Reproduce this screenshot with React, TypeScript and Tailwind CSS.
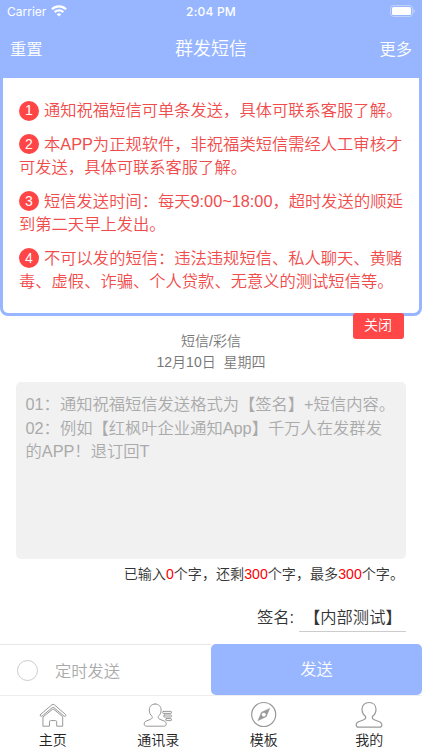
import type { ReactNode } from "react";

const notices: string[][] = [
  ["通知祝福短信可单条发送，具体可联系客服了解。"],
  ["本APP为正规软件，非祝福类短信需经人工审核才", "可发送，具体可联系客服了解。"],
  ["短信发送时间：每天9:00~18:00，超时发送的顺延", "到第二天早上发出。"],
  ["不可以发的短信：违法违规短信、私人聊天、黄赌", "毒、虚假、诈骗、个人贷款、无意义的测试短信等。"],
];

const placeholder = [
  "01：通知祝福短信发送格式为【签名】+短信内容。",
  "02：例如【红枫叶企业通知App】千万人在发群发",
  "的APP！退订回T",
];

function Icon({ children }: { children: ReactNode }) {
  return (
    <svg
      width="30"
      height="28"
      viewBox="0 0 30 28"
      fill="none"
      stroke="#999"
      strokeWidth="1"
      strokeLinejoin="round"
      strokeLinecap="round"
    >
      {children}
    </svg>
  );
}

const tabs: { label: string; icon: ReactNode }[] = [
  {
    label: "主页",
    icon: (
      <Icon>
        <path d="M2.500 13.500 14 3.700q1.100-.9 2.200 0L27.600 13.500q.7.9 0 1.600-.8.6-1.600 0L16 6.700q-.9-.7-1.800 0L4 15.100q-.9.6-1.600-.1-.5-.8.1-1.500Z" />
        <path d="M5.300 15.700 14.200 8.500q.9-.7 1.800 0l8.700 7.200v9.500h-6v-4.500q0-1.100-1.100-1.100h-5q-1.100 0-1.100 1.100v4.500H5.300Z" />
      </Icon>
    ),
  },
  {
    label: "通讯录",
    icon: (
      <Icon>
        <path d="M12.2 3c-3.6 0-5.9 2.5-5.9 6.1 0 2.7 1 4.9 2.9 6.3.3 1.600-.3 2.400-1.800 3L3.200 20c-1.400.6-2 1.500-2 3.100 0 1.400.8 2.100 2.400 2.100h17.200c1.600 0 2.400-.7 2.400-2.100 0-1.600-.6-2.500-2-3.100L17 18.400c-1.500-.6-2.100-1.400-1.800-3 1.900-1.400 2.900-3.600 2.900-6.300C18.100 5.500 15.800 3 12.200 3Z" />
        <rect x="19.800" y="10.400" width="8.600" height="2" rx=".5" />
        <rect x="20.800" y="14" width="7.600" height="2" rx=".5" />
        <rect x="22.800" y="17.600" width="5.600" height="2" rx=".5" />
      </Icon>
    ),
  },
  {
    label: "模板",
    icon: (
      <Icon>
        <circle cx="14.700" cy="13.500" r="12" strokeWidth="1.200" />
        <path
          d="M20.700 7.500 17.300 15.700 8.900 19.700 12.400 11.300ZM14.800 11.400a2.200 2.200 0 1 0 .01 4.400a2.200 2.200 0 1 0-.01-4.400Z"
          fill="#999"
          fillRule="evenodd"
          strokeWidth=".4"
        />
      </Icon>
    ),
  },
  {
    label: "我的",
    icon: (
      <Icon>
        <path
          strokeWidth="1.200"
          d="M15 1.500c-4.200 0-7 2.600-7 6.800 0 3 1.300 5.500 3.600 7.200.4 1.800-.2 2.700-1.800 3.300l-5.100 1.900c-1.700.6-2.500 1.600-2.500 3.200 0 1.400.7 2.200 2.200 2.200h21.200c1.500 0 2.200-.8 2.200-2.200 0-1.600-.8-2.600-2.500-3.200l-5.100-1.900c-1.600-.6-2.200-1.500-1.800-3.300C20.700 13.800 22 11.300 22 8.300 22 4.100 19.200 1.500 15 1.500Z"
        />
      </Icon>
    ),
  },
];

function StatusBar() {
  return (
    <div className="grid h-[22px] grid-cols-3 items-center px-[7px] font-['Inter',sans-serif] text-[12px] font-normal text-white">
      <div className="flex items-center gap-[5px]">
        <span>Carrier</span>
        <svg className="mb-px" width="16" height="12" viewBox="0 0 16 12" fill="none" stroke="#fff" strokeWidth="2.300">
          <path d="M1 4.300a10 10 0 0 1 14 0" />
          <path d="M3.700 7.200a6.200 6.200 0 0 1 8.600 0" />
          <path d="M8 11.600 5.700 9.300a3.300 3.300 0 0 1 4.600 0Z" fill="#fff" stroke="none" />
        </svg>
      </div>
      <span className="text-center font-medium tracking-[0.2px]">2:04 PM</span>
      <svg className="mb-[2px] justify-self-end" width="25" height="12" viewBox="0 0 25 12">
        <rect x=".5" y=".5" width="22" height="11" rx="3" fill="none" stroke="#fff" strokeOpacity=".4" />
        <rect x="2" y="2" width="19" height="8" rx="1.600" fill="#fff" />
        <path d="M23.600 4v4q1.200-.7 1.200-2t-1.200-2Z" fill="#fff" fillOpacity=".5" />
      </svg>
    </div>
  );
}

export default function App() {
  return (
    <div className="flex h-[750px] w-[422px] flex-col overflow-hidden bg-white font-['Liberation_Sans','Noto_Sans_CJK_SC',sans-serif] text-[16.3px] leading-[23.5px] font-[350] whitespace-nowrap text-[#333]">
      <header className="h-[78px] bg-[#97b6ff] text-white">
        <StatusBar />
        <div className="flex h-[56px] items-center justify-between px-2.5">
          <span>重置</span>
          <h1 className="text-[18px]">群发短信</h1>
          <span>更多</span>
        </div>
      </header>

      <section className="relative h-[238px] rounded-b-[8px] border-x-[3.5px] border-b-[3px] border-[#97b6ff] pt-[21px] pl-4 text-[#f04c4c]">
        <ol className="space-y-2.5">
          {notices.map((lines, index) => (
            <li key={lines[0]}>
              <div className="flex h-[23.5px] items-center gap-[5px]">
                <span className="flex size-5 items-center justify-center rounded-full bg-[#ff4545] text-[14px] text-white">
                  {index + 1}
                </span>
                <span>{lines[0]}</span>
              </div>
              {lines[1] && <p>{lines[1]}</p>}
            </li>
          ))}
        </ol>
        <button className="absolute -bottom-[26px] right-[15.5px] h-[26px] w-[51px] rounded-[3px] bg-[#ff4747] text-[14px] text-white">
          关闭
        </button>
      </section>

      <main className="flex flex-1 flex-col px-4">
        <div className="pt-[15px] text-center text-[14px] leading-[21px] text-[#777]">
          <p>短信/彩信</p>
          <p className="whitespace-pre">12月10日  星期四</p>
        </div>

        <div className="mt-[9px] h-[177px] rounded-[5px] bg-[#f1f1f1] pt-[11px] pl-[9.5px] text-[#aaa]">
          {placeholder.map((line) => (
            <p key={line}>{line}</p>
          ))}
        </div>

        <p className="mt-1 self-end pr-[2px] text-[14.1px]">
          已输入<b className="font-normal text-[#f00]">0</b>个字，还剩
          <b className="font-normal text-[#f00]">300</b>个字，最多
          <b className="font-normal text-[#f00]">300</b>个字。
        </p>

        <div className="mt-[19px] flex justify-end gap-[5px]">
          <span>签名:</span>
          <div className="h-[26px] w-[107px] border-b border-[#ccc] pl-[5px]">【内部测试】</div>
        </div>
      </main>

      <div className="flex h-[51px]">
        <label className="flex flex-1 items-center gap-[17px] border-t border-[#e8e8e8] pl-[17px] text-[#aaa]">
          <span className="size-[21px] rounded-full border border-[#ccc]" />
          <span className="pt-1">定时发送</span>
        </label>
        <button className="w-[211px] rounded-[5px] bg-[#97b6ff] text-white">发送</button>
      </div>

      <nav className="grid h-[55px] grid-cols-4 border-t border-[#eee] text-[14px] leading-[20px] text-[#222]">
        {tabs.map((tab) => (
          <div key={tab.label} className="flex flex-col items-center pt-[5px]">
            {tab.icon}
            <span className="mt-px">{tab.label}</span>
          </div>
        ))}
      </nav>
    </div>
  );
}
